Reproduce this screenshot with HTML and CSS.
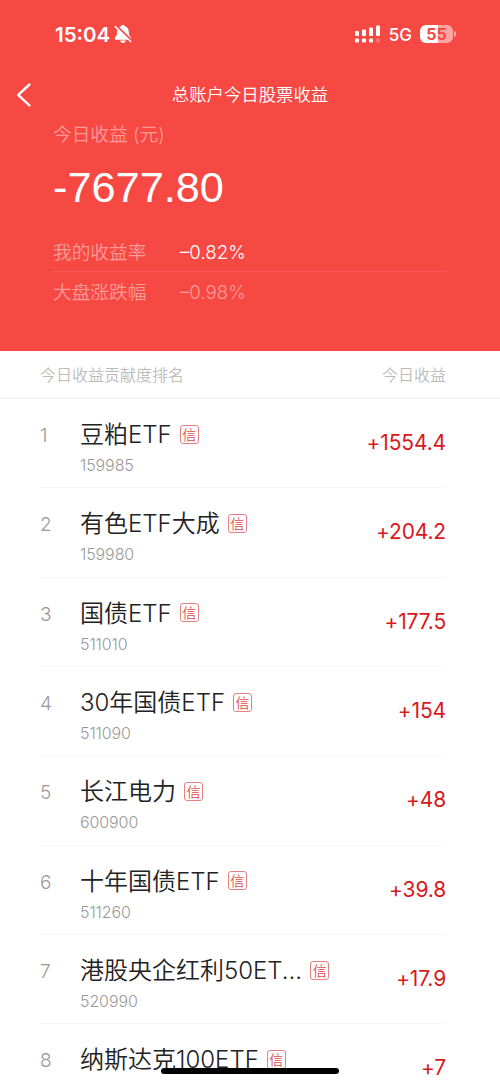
FILE: index.html
```
<!DOCTYPE html>
<html lang="zh-CN">
<head>
    <meta charset="UTF-8">
    <meta name="viewport" content="width=device-width, initial-scale=1.0">
    <title>总账户今日股票收益</title>
    <link rel="stylesheet" href="styles.css">
</head>
<body>
    <header class="header">
        <!-- Status bar -->
        <div class="status-bar">
            <div class="status-left">
                <span class="time">15:04</span>
                <svg class="bell" width="18" height="20" viewBox="0 0 18 20">
                    <path fill="#fff" d="M9 1c1 0 1.700.6 1.900 1.300 2.400.7 3.800 2.700 3.900 5.300.1 3 .7 4.300 1.800 5.500.5.600.7 1 .7 1.500 0 .7-.5 1.200-1.300 1.200H2c-.8 0-1.300-.5-1.300-1.200 0-.5.200-.9.700-1.500 1.100-1.200 1.700-2.500 1.800-5.500.1-2.600 1.500-4.600 3.900-5.300C7.300 1.600 8 1 9 1z"/>
                    <path fill="#fff" d="M6.200 16.600h5.600c-.2 1.400-1.300 2.300-2.800 2.300s-2.600-.9-2.800-2.300z"/>
                    <path stroke="#f74944" stroke-width="2.400" d="M2 1.600l15 14.500"/>
                    <path stroke="#fff" stroke-width="1.500" stroke-linecap="round" d="M1.300 2.600l15.400 14.900"/>
                </svg>
            </div>
            <div class="status-right">
                <svg class="signal" width="26" height="18" viewBox="0 0 26 18" fill="#fff">
                    <rect x="0" y="6" width="4" height="5" rx="1"/>
                    <rect x="7" y="4.500" width="4" height="6.500" rx="1"/>
                    <rect x="14" y="2.500" width="4" height="8.500" rx="1"/>
                    <rect x="21" y="0.500" width="4" height="10.500" rx="1"/>
                    <rect x="0" y="13.500" width="4" height="4" rx="1"/>
                    <rect x="7" y="13.500" width="4" height="4" rx="1"/>
                    <rect x="14" y="13.500" width="4" height="4" rx="1"/>
                    <rect x="21" y="13.500" width="4" height="4" rx="1" opacity="0.250"/>
                </svg>
                <span class="network">5G</span>
                <div class="battery"><span>5</span><span>5</span></div>
                <div class="battery-cap"></div>
            </div>
        </div>

        <div class="title-bar">
            <svg class="back" width="16" height="26" viewBox="0 0 16 26">
                <path d="M13.500 2.500L2.200 12.800l11.300 10.700" fill="none" stroke="#fff" stroke-width="2.400" stroke-linecap="round" stroke-linejoin="round"/>
            </svg>
            <h1 class="title">总账户今日股票收益</h1>
        </div>

        <div class="summary">
            <div class="summary-label">今日收益 (元)</div>
            <div class="total">-7677.80</div>
            <div class="rate-row">
                <span class="rate-label">我的收益率</span>
                <span class="rate-value">–0.82%</span>
            </div>
            <div class="rate-row market">
                <span class="rate-label">大盘涨跌幅</span>
                <span class="rate-value">–0.98%</span>
            </div>
        </div>
    </header>

    <div class="list-head">
        <span>今日收益贡献度排名</span>
        <span>今日收益</span>
    </div>

    <div class="list">
        <div class="row">
            <span class="rank">1</span>
            <div class="stock">
                <div class="name">豆粕ETF<span class="tag">信</span></div>
                <div class="code">159985</div>
            </div>
            <span class="profit">+1554.4</span>
        </div>
        <div class="row">
            <span class="rank">2</span>
            <div class="stock">
                <div class="name">有色ETF大成<span class="tag">信</span></div>
                <div class="code">159980</div>
            </div>
            <span class="profit">+204.2</span>
        </div>
        <div class="row">
            <span class="rank">3</span>
            <div class="stock">
                <div class="name">国债ETF<span class="tag">信</span></div>
                <div class="code">511010</div>
            </div>
            <span class="profit">+177.5</span>
        </div>
        <div class="row">
            <span class="rank">4</span>
            <div class="stock">
                <div class="name">30年国债ETF<span class="tag">信</span></div>
                <div class="code">511090</div>
            </div>
            <span class="profit">+154</span>
        </div>
        <div class="row">
            <span class="rank">5</span>
            <div class="stock">
                <div class="name">长江电力<span class="tag">信</span></div>
                <div class="code">600900</div>
            </div>
            <span class="profit">+48</span>
        </div>
        <div class="row">
            <span class="rank">6</span>
            <div class="stock">
                <div class="name">十年国债ETF<span class="tag">信</span></div>
                <div class="code">511260</div>
            </div>
            <span class="profit">+39.8</span>
        </div>
        <div class="row">
            <span class="rank">7</span>
            <div class="stock">
                <div class="name">港股央企红利50ET...<span class="tag">信</span></div>
                <div class="code">520990</div>
            </div>
            <span class="profit">+17.9</span>
        </div>
        <div class="row">
            <span class="rank">8</span>
            <div class="stock">
                <div class="name">纳斯达克100ETF<span class="tag">信</span></div>
            </div>
            <span class="profit">+7</span>
        </div>
    </div>

    <div class="home-bar"></div>
</body>
</html>
```
FILE: styles.css
```
* {
    box-sizing: border-box;
}

body {
    margin: 0;
    height: 1084px;
    overflow: hidden;
    background: #fff;
    font-family: Inter, "Noto Sans CJK SC", sans-serif;
    font-weight: 300;
}

/* Red header */
.header {
    height: 351px;
    background: #f74944;
    color: #fff;
}

.status-bar {
    display: flex;
    justify-content: space-between;
    height: 70px;
    padding: 0 44px 0 55px;
}

.status-left,
.status-right {
    display: flex;
    align-items: center;
    height: 68px;
}

.time {
    font-size: 20.5px;
    font-weight: 600;
}

.bell {
    margin-left: 4px;
}

.network {
    margin: 1px 0 0 8px;
    font-size: 17px;
    font-weight: 500;
}

.battery {
    display: flex;
    justify-content: center;
    width: 33px;
    height: 18px;
    margin-left: 8px;
    border-radius: 6px;
    background: linear-gradient(90deg, #fff 55%, #fba4a1 55%);
    color: #f74944;
    font-size: 16px;
    font-weight: 700;
    line-height: 18px;
}

.battery-cap {
    width: 2px;
    height: 6px;
    margin-left: 1px;
    border-radius: 0 2px 2px 0;
    background: #fba4a1;
}

/* Title */
.title-bar {
    display: grid;
    grid-template-columns: 36px 1fr 36px;
    align-items: center;
    height: 50px;
}

.back {
    margin-left: 16px;
}

.title {
    margin: 0;
    font-size: 17.4px;
    font-weight: 350;
    line-height: 26px;
    text-align: center;
}

/* Profit summary */
.summary {
    padding: 0 53px;
}

.summary-label {
    height: 28px;
    color: #fb9b97;
    font-size: 18.7px;
    font-weight: 350;
    line-height: 30px;
}

.total {
    height: 83px;
    font-family: "Liberation Sans", Arial, sans-serif;
    font-size: 43.3px;
    font-weight: 400;
    line-height: 79px;
}

.rate-row {
    display: flex;
    height: 41px;
    border-bottom: 1px solid #f85a55;
    font-size: 18.7px;
    font-weight: 350;
    line-height: 44px;
}

.rate-label {
    width: 127px;
    color: #fb9b97;
}

.market {
    border-bottom: none;
    color: #fb9b97;
    line-height: 42px;
}

/* Ranking list */
.list-head {
    display: flex;
    justify-content: space-between;
    height: 48px;
    padding: 0 54px 0 40px;
    border-bottom: 2px solid #f5f5f5;
    color: #bcbcbc;
    font-size: 16px;
    font-weight: 350;
    line-height: 48px;
}

.list {
    padding: 0 54px 0 40px;
}

.row {
    display: flex;
    height: 89.35px;
    border-bottom: 1px solid #f7f7f7;
}

.rank {
    width: 40px;
    color: #999;
    font-size: 19px;
    line-height: 74px;
}

.stock {
    flex: 1;
    padding-top: 18px;
}

.name {
    display: flex;
    align-items: center;
    height: 36px;
    color: #222;
    font-size: 24px;
    font-weight: 350;
    line-height: 38px;
}

.tag {
    width: 19px;
    height: 19px;
    margin: -2px 0 0 8px;
    border: 1px solid #e88080;
    border-radius: 3px;
    color: #e04a4a;
    font-size: 14px;
    line-height: 17px;
    text-align: center;
}

.code {
    color: #999;
    font-size: 16px;
    line-height: 25px;
    letter-spacing: -0.1px;
}

.profit {
    color: #d7191c;
    font-size: 21px;
    font-weight: 370;
    line-height: 88px;
    letter-spacing: -0.15px;
}

/* Home indicator, sits above the list */
.home-bar {
    position: fixed;
    left: 161px;
    bottom: 10px;
    width: 178px;
    height: 6px;
    border-radius: 3px;
    background: #000;
}
```
